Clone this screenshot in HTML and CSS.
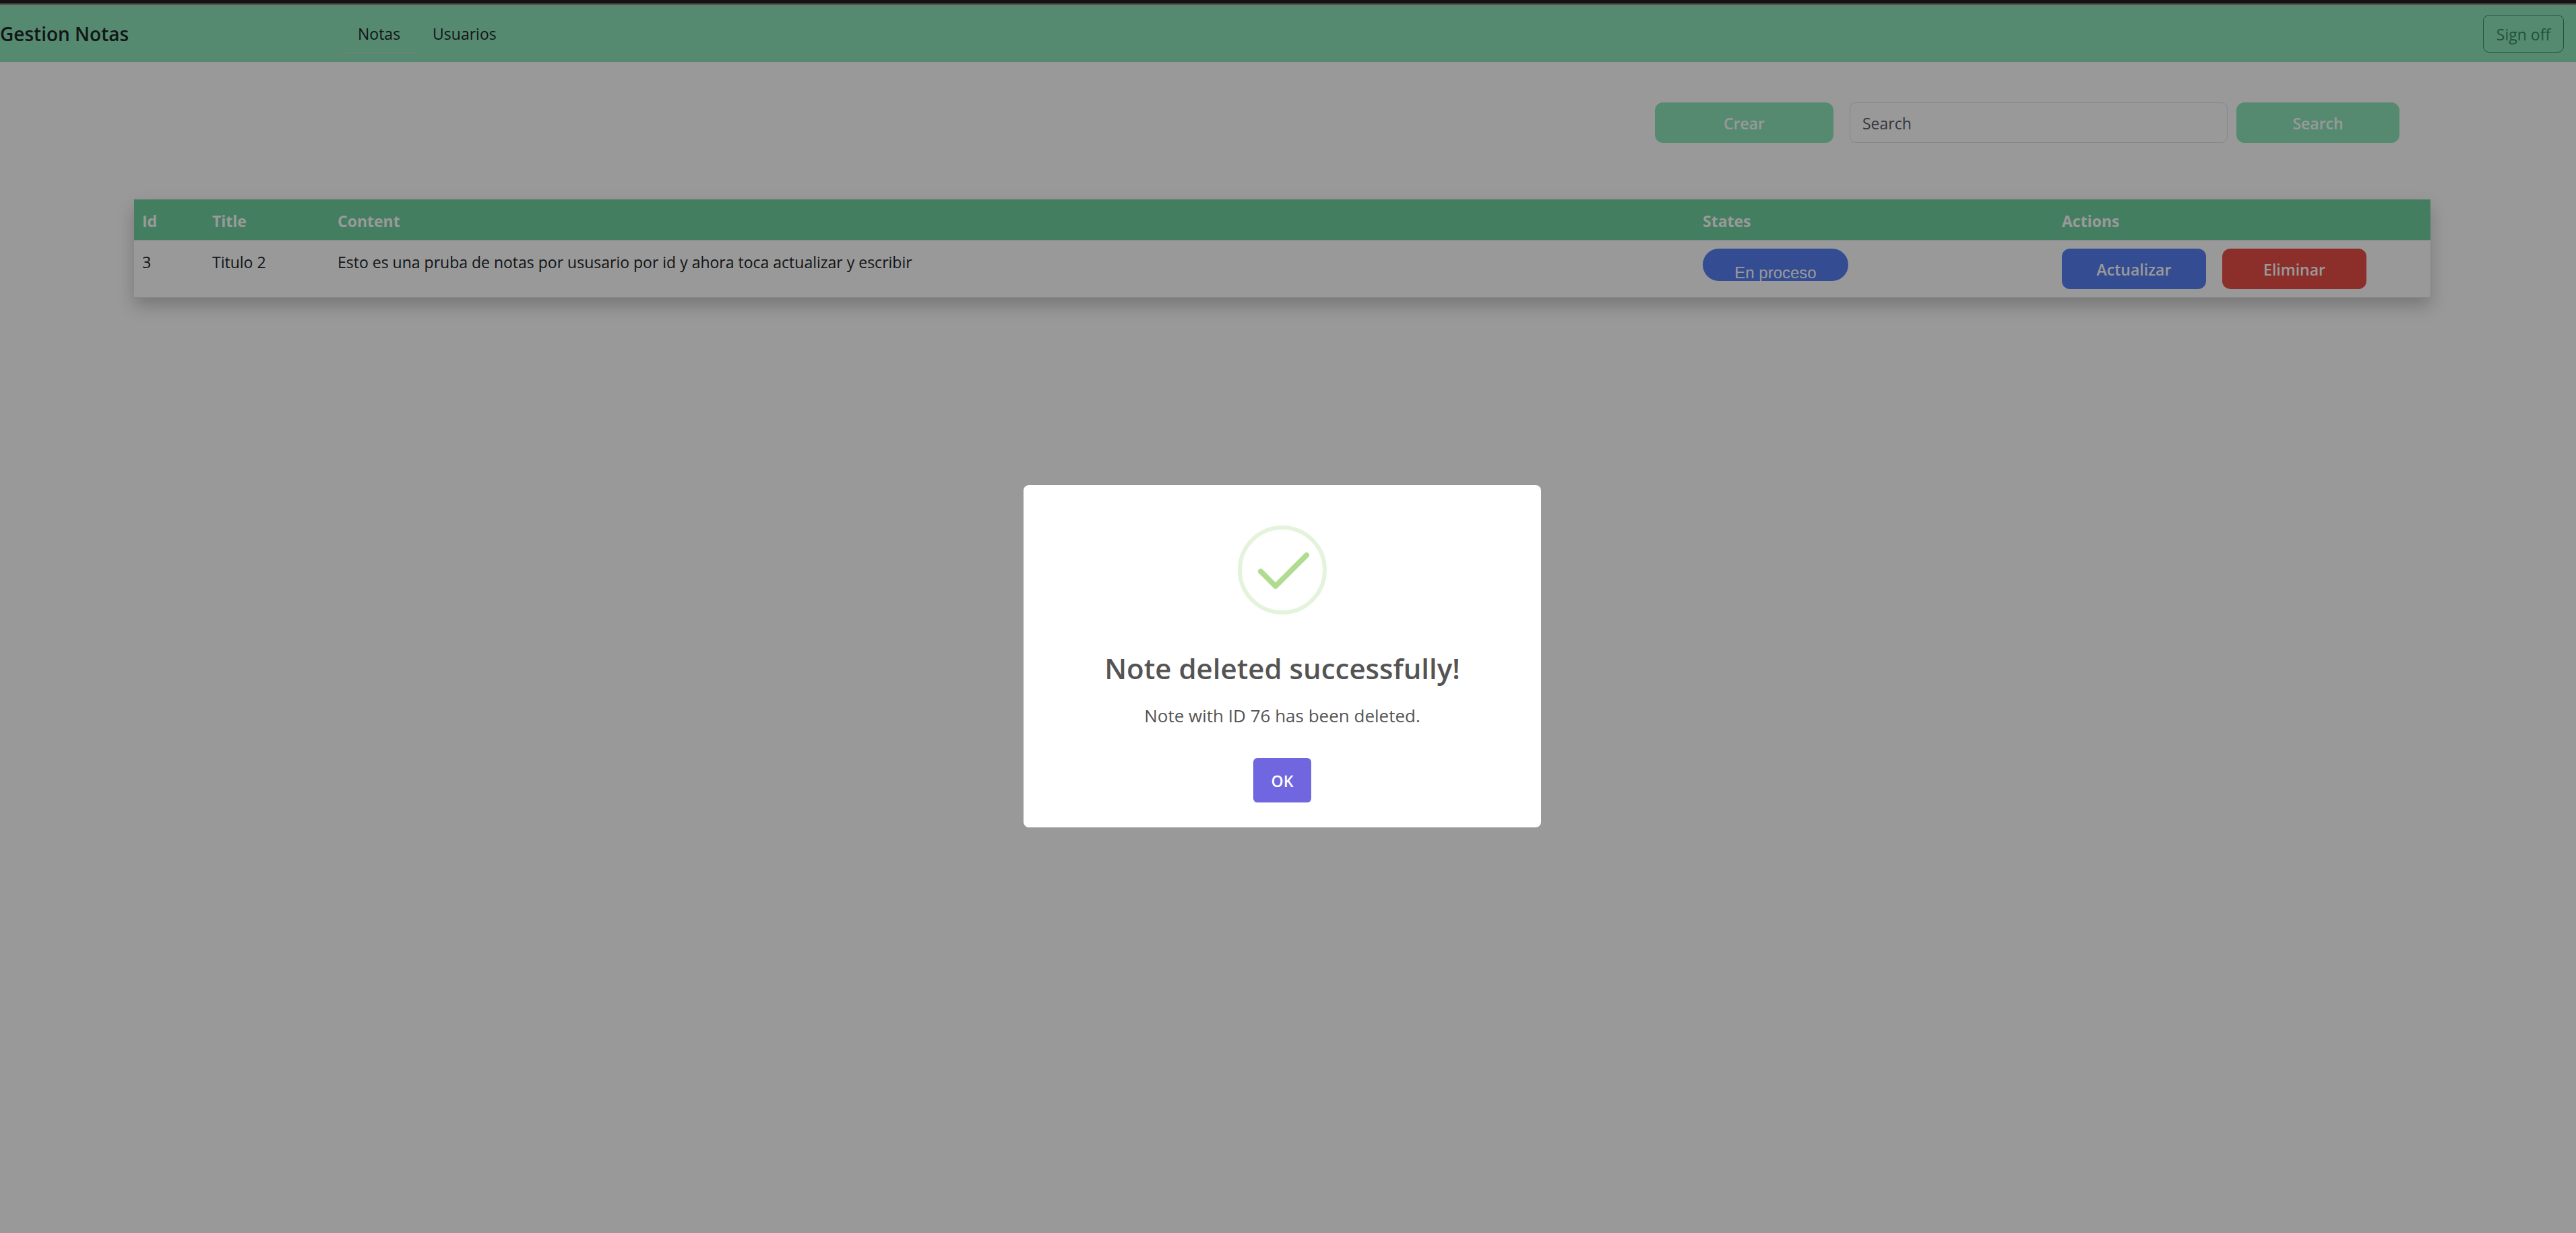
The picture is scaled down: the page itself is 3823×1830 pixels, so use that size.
FILE: index.html
```
<!DOCTYPE html>
<html lang="es">
<head>
<meta charset="utf-8">
<title>Gestion Notas</title>
<link rel="stylesheet" href="styles.css">
</head>
<body>
<header class="navbar">
  <a class="brand" href="#">Gestion Notas</a>
  <nav class="nav">
    <a class="nav-link active" href="#">Notas</a>
    <a class="nav-link" href="#">Usuarios</a>
  </nav>
  <button class="btn-signoff" type="button">Sign off</button>
</header>
<main class="page">
  <form class="toolbar">
    <button class="btn btn-create" type="button">Crear</button>
    <input class="search" type="search" placeholder="Search" aria-label="Search">
    <button class="btn btn-search" type="button">Search</button>
  </form>
  <table class="notes">
    <colgroup><col class="c-id"><col class="c-title"><col><col class="c-state"><col class="c-actions"></colgroup>
    <thead>
      <tr><th>Id</th><th>Title</th><th>Content</th><th>States</th><th>Actions</th></tr>
    </thead>
    <tbody>
      <tr>
        <td>3</td>
        <td>Titulo 2</td>
        <td>Esto es una pruba de notas por ususario por id y ahora toca actualizar y escribir</td>
        <td class="cell-controls"><span class="state">En proceso</span></td>
        <td class="cell-controls">
          <div class="actions">
            <button class="btn btn-update" type="button">Actualizar</button>
            <button class="btn btn-delete" type="button">Eliminar</button>
          </div>
        </td>
      </tr>
    </tbody>
  </table>
</main>
<div class="overlay">
  <div class="modal" role="dialog" aria-modal="true" aria-labelledby="modal-title">
    <svg class="modal-icon" viewBox="0 0 132 132" aria-hidden="true">
      <circle cx="66" cy="66" r="63" fill="none" stroke="#e4f3db" stroke-width="6"/>
      <path d="M34 68 56 90 102 44" fill="none" stroke="#afdc8f" stroke-width="8" stroke-linecap="round" stroke-linejoin="round"/>
    </svg>
    <h2 class="modal-title" id="modal-title">Note deleted successfully!</h2>
    <p class="modal-text">Note with ID 76 has been deleted.</p>
    <button class="modal-ok" type="button">OK</button>
  </div>
</div>
</body>
</html>
```
FILE: styles.css
```
* { box-sizing: border-box; }

body {
  min-height: 100vh;
  margin: 0;
  background: #fff;
  color: #212529;
  font: 23px/36px "Segoe UI", "Open Sans", "Noto Sans", sans-serif;
}

button, input { font: inherit; }
a { color: inherit; text-decoration: none; }

.navbar {
  display: flex;
  align-items: center;
  height: 92px;
  padding-right: 18px;
  border-top: 5px solid #212121;
  background: #8ee6bc;
  box-shadow: inset 0 2px #917878;
}
.brand { width: 507px; padding-top: 3px; font-size: 28px; font-weight: 600; }
.nav { display: flex; flex: 1; }
.nav-link {
  padding: 14px 24px 10px;
  border-bottom: 1px solid transparent;
}
.nav-link.active { border-color: #dcd0d8; }
.btn-signoff {
  width: 120px;
  height: 56px;
  margin-top: 3px;
  padding: 2px 0 0;
  border: 1px solid #3a8a5c;
  border-radius: 9px;
  background: transparent;
  color: #3a8a5c;
}

.page { min-height: calc(100vh - 92px); padding: 60px 216px 48px 199px; }
.toolbar {
  display: flex;
  justify-content: flex-end;
  padding-right: 46px;
  margin-bottom: 84px;
}
.btn {
  height: 60px;
  padding: 2px 0 0;
  border: 0;
  border-radius: 12px;
  color: #fff;
  font-weight: 600;
}
.btn-create { width: 265px; margin-right: 24px; background: #8ee6bc; }
.btn-search { width: 242px; background: #8ee6bc; }
.search {
  width: 561px;
  height: 60px;
  margin-right: 13px;
  padding: 2px 18px 0;
  border: 1px solid #dee2e6;
  border-radius: 9px;
  background: #fff;
}
.search::placeholder { color: #595c5f; opacity: 1; }

.notes {
  width: 100%;
  table-layout: fixed;
  border-collapse: separate;
  border-spacing: 0;
  box-shadow: 0 12px 24px rgba(0, 0, 0, .22);
}
.c-id { width: 104px; }
.c-title { width: 186px; }
.c-state { width: 533px; }
.c-actions { width: 559px; }
.notes th, .notes td {
  padding: 14px 12px 10px;
  border-bottom: 1px solid #dee2e6;
  text-align: left;
  vertical-align: top;
}
.notes th {
  height: 61px;
  background: #71d2a0;
  color: #fff;
  font-weight: 700;
}
.notes td { height: 85px; background: #fff; }
.notes .cell-controls { padding-top: 12px; }
.state {
  display: block;
  width: 216px;
  height: 48px;
  padding-top: 19px;
  border-radius: 24px;
  overflow: hidden;
  background: #577ff3;
  color: #fff;
  font: 24px/34px "Liberation Sans", Arial, sans-serif;
  text-align: center;
}
.actions { display: flex; gap: 24px; }
.btn-update, .btn-delete { width: 214px; }
.btn-update { background: #577ff3; }
.btn-delete { background: #e94d46; }

.overlay {
  position: fixed;
  inset: 0;
  display: flex;
  align-items: center;
  justify-content: center;
  padding: 118px 17px 0 0;
  background: rgba(0, 0, 0, .4);
}
.modal {
  display: flex;
  flex-direction: column;
  align-items: center;
  width: 768px;
  padding: 60px 24px 37px;
  border-radius: 8px;
  background: #fff;
  color: #545454;
}
.modal-icon { width: 132px; height: 132px; }
.modal-title {
  margin: 48px 0 0;
  font-size: 42px;
  font-weight: 600;
  line-height: 64px;
}
.modal-text { margin: 18px 0 43px; font-size: 26px; line-height: 40px; }
.modal-ok {
  width: 86px;
  height: 66px;
  padding: 2px 0 0;
  border: 0;
  border-radius: 6px;
  background: #7066e0;
  color: #fff;
  font-weight: 600;
}
```
